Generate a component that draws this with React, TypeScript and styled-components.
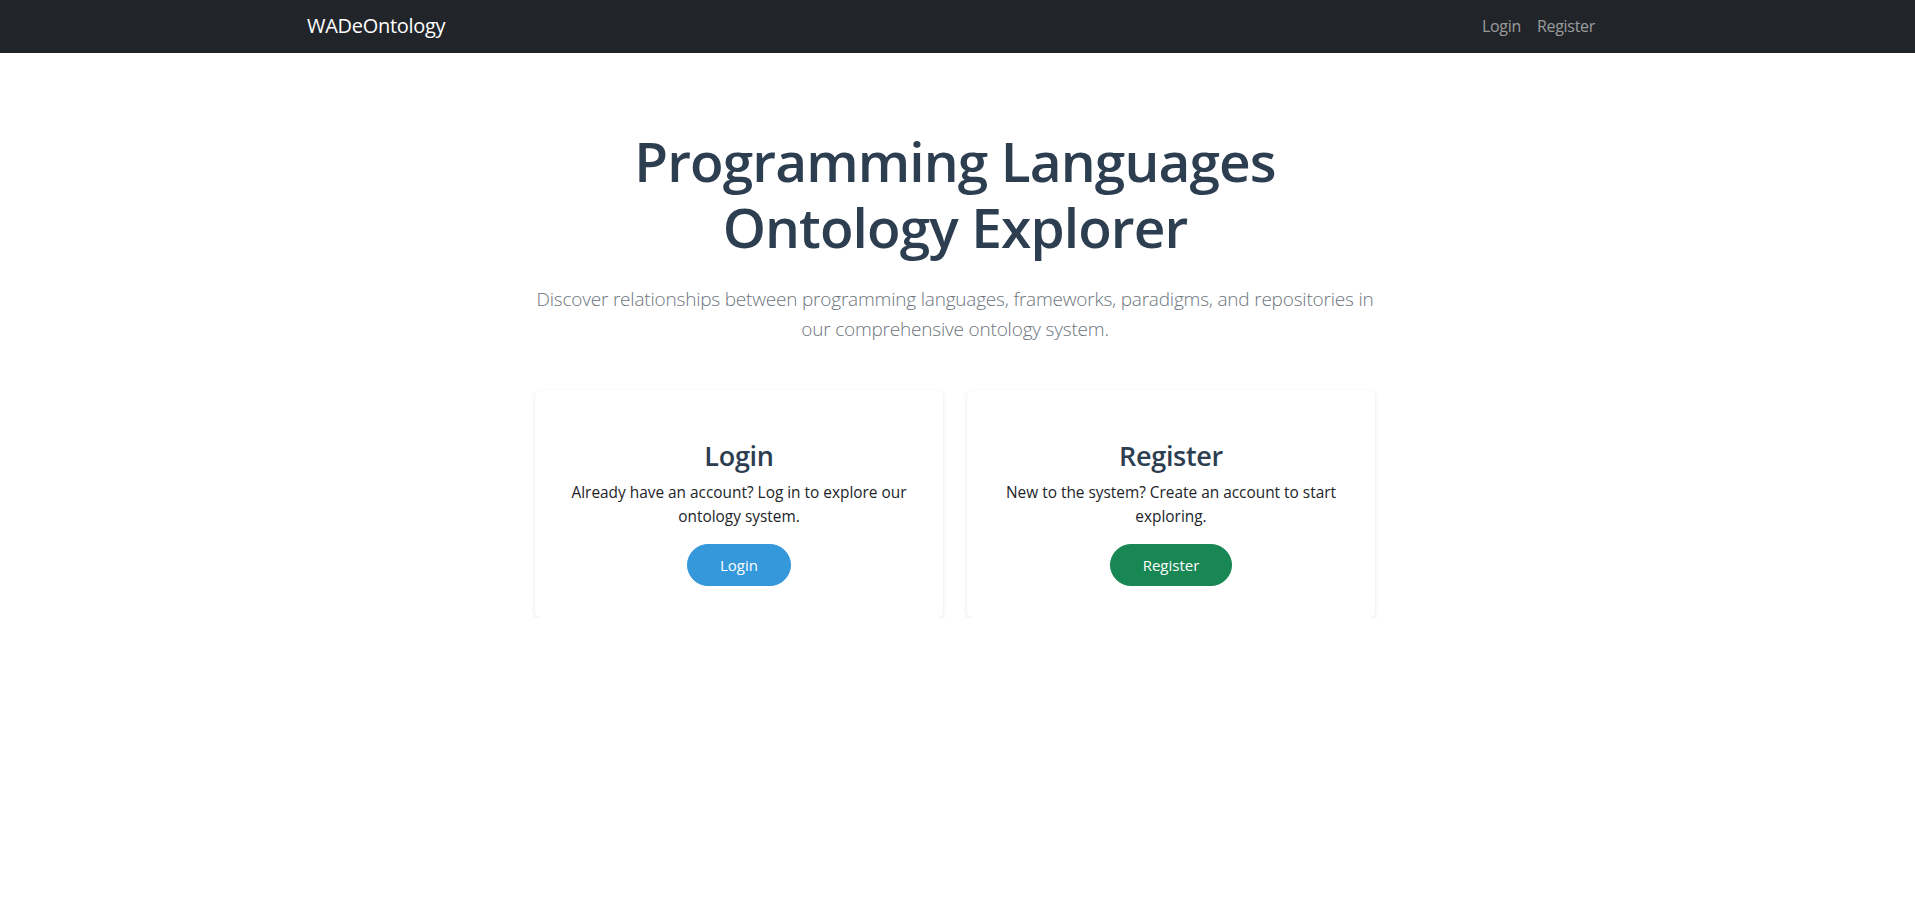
import styled, { createGlobalStyle } from "styled-components";

const GlobalStyle = createGlobalStyle`
  * {
    box-sizing: border-box;
  }
  body {
    margin: 0;
    background: #ffffff;
    font-family: "Open Sans", "Noto Sans", Arial, sans-serif;
    color: #212529;
  }
`;

const Navbar = styled.nav`
  background: #212529;
  height: 53px;
  padding: 0 5px 2px 0;
`;

const NavContainer = styled.div`
  max-width: 1296px;
  height: 100%;
  margin: 0 auto;
  display: flex;
  align-items: center;
  justify-content: space-between;
`;

const Brand = styled.a`
  color: #ffffff;
  font-size: 20px;
  text-decoration: none;
  letter-spacing: -0.3px;
`;

const NavLinks = styled.div`
  display: flex;
`;

const NavLink = styled.a`
  color: rgba(255, 255, 255, 0.55);
  font-size: 16px;
  padding: 8px;
  text-decoration: none;
  letter-spacing: -0.3px;
`;

const Page = styled.div`
  padding-right: 5px;
`;

const Main = styled.main`
  max-width: 840px;
  margin: 0 auto;
  padding-top: 75px;
  text-align: center;
`;

const Title = styled.h1`
  margin: 0 0 24px;
  font-size: 55px;
  line-height: 66px;
  font-weight: 600;
  color: #2c3e50;
  letter-spacing: -0.9px;
`;

const Lead = styled.p`
  margin: 0 0 46px;
  font-size: 19px;
  line-height: 30px;
  font-weight: 300;
  color: #6c757d;
  letter-spacing: -0.2px;
`;

const CardRow = styled.div`
  display: grid;
  grid-template-columns: 1fr 1fr;
  gap: 24px;
`;

const Card = styled.div`
  background: #ffffff;
  border-radius: 6px;
  box-shadow: 0 2px 5px rgba(0, 0, 0, 0.09), 0 0 1px rgba(0, 0, 0, 0.05);
  padding: 49px 32px 32px;
`;

const CardTitle = styled.h3`
  margin: 0 0 8px;
  font-size: 27px;
  line-height: 34px;
  font-weight: 600;
  color: #2c3e50;
  letter-spacing: -0.3px;
`;

const CardText = styled.p`
  margin: 0 0 15px;
  font-size: 15.4px;
  line-height: 24px;
  color: #212529;
`;

const Button = styled.a<{ $color: string }>`
  display: inline-block;
  padding: 8px 32px;
  border: 1px solid ${(p) => p.$color};
  border-radius: 50px;
  background: ${(p) => p.$color};
  color: #ffffff;
  font-size: 15px;
  line-height: 24px;
  text-decoration: none;
`;

export default function App() {
  return (
    <>
      <GlobalStyle />
      <Navbar>
        <NavContainer>
          <Brand href="#">WADeOntology</Brand>
          <NavLinks>
            <NavLink href="#">Login</NavLink>
            <NavLink href="#">Register</NavLink>
          </NavLinks>
        </NavContainer>
      </Navbar>
      <Page>
        <Main>
          <Title>Programming Languages Ontology Explorer</Title>
          <Lead>
            Discover relationships between programming languages, frameworks, paradigms, and
            repositories in our comprehensive ontology system.
          </Lead>
          <CardRow>
            <Card>
              <CardTitle>Login</CardTitle>
              <CardText>Already have an account? Log in to explore our ontology system.</CardText>
              <Button href="#" $color="#3498db">Login</Button>
            </Card>
            <Card>
              <CardTitle>Register</CardTitle>
              <CardText>New to the system? Create an account to start exploring.</CardText>
              <Button href="#" $color="#198754">Register</Button>
            </Card>
          </CardRow>
        </Main>
      </Page>
    </>
  );
}
